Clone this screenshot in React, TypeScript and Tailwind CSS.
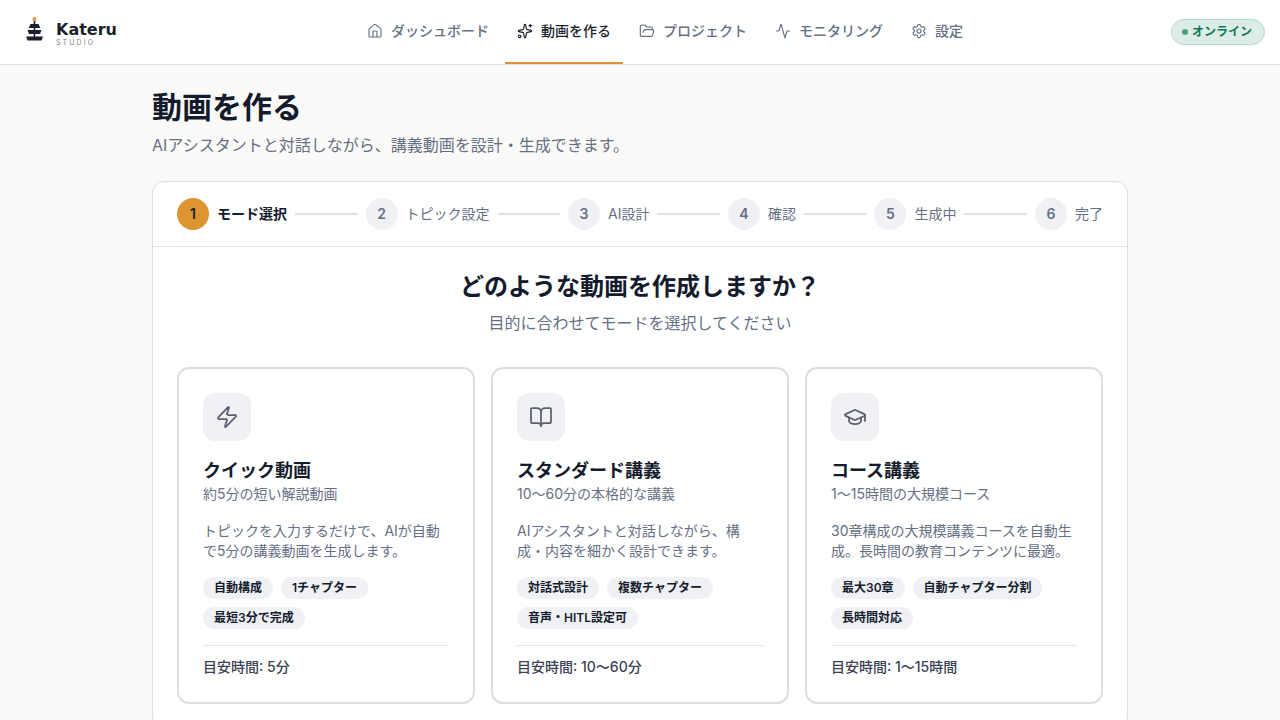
import React from "react";
import { House, Sparkles, FolderOpen, Activity, Settings, Zap, BookOpen, GraduationCap } from "lucide-react";

const font = "font-['Inter','Noto_Sans_CJK_JP',sans-serif]";

const nav = [
  { label: "ダッシュボード", Icon: House },
  { label: "動画を作る", Icon: Sparkles, active: true },
  { label: "プロジェクト", Icon: FolderOpen },
  { label: "モニタリング", Icon: Activity },
  { label: "設定", Icon: Settings },
];

const steps = ["モード選択", "トピック設定", "AI設計", "確認", "生成中", "完了"];

const cards = [
  {
    Icon: Zap,
    title: "クイック動画",
    sub: "約5分の短い解説動画",
    desc: "トピックを入力するだけで、AIが自動で5分の講義動画を生成します。",
    tags: ["自動構成", "1チャプター", "最短3分で完成"],
    time: "目安時間: 5分",
  },
  {
    Icon: BookOpen,
    title: "スタンダード講義",
    sub: "10〜60分の本格的な講義",
    desc: "AIアシスタントと対話しながら、構成・内容を細かく設計できます。",
    tags: ["対話式設計", "複数チャプター", "音声・HITL設定可"],
    time: "目安時間: 10〜60分",
  },
  {
    Icon: GraduationCap,
    title: "コース講義",
    sub: "1〜15時間の大規模コース",
    desc: "30章構成の大規模講義コースを自動生成。長時間の教育コンテンツに最適。",
    tags: ["最大30章", "自動チャプター分割", "長時間対応"],
    time: "目安時間: 1〜15時間",
  },
];

function Logo() {
  return (
    <svg width="20" height="26" viewBox="0 0 20 26" className="-mt-[6px] shrink-0">
      <circle cx="10.5" cy="3" r="2.2" fill="#e0a458" />
      <rect x="9.7" y="5" width="1.6" height="17" fill="#1a1f2e" />
      <path d="M6.5 8h8l1.8 4H4.7z" fill="#1a1f2e" />
      <path d="M3.5 14h14l-1.4 4H4.9z" fill="#1a1f2e" />
      <path d="M2 20.5h17l-1.5 4H3.5z" fill="#1a1f2e" />
    </svg>
  );
}

export default function App() {
  return (
    <div className={`${font} h-[720px] overflow-hidden bg-[#fbfaf8]`}>
      <header className="flex h-[65px] items-center justify-between border-b border-[#dedede] bg-white pl-6 pr-[15px]">
        <div className="flex w-[135px] items-center gap-[12px]">
          <Logo />
          <div className="flex flex-col pt-[4px]">
            <span className="font-['DejaVu_Sans',sans-serif] text-[16px] font-bold leading-[18px] text-[#1a1f2e]">Kateru</span>
            <span className="text-[7px] leading-[8px] tracking-[0.3em] text-[#7a8090]">STUDIO</span>
          </div>
        </div>
        <nav className="flex h-full items-center gap-1">
          {nav.map(({ label, Icon, active }) => (
            <div
              key={label}
              className={`flex h-full items-center gap-2 px-3 text-[14px] font-medium leading-[20px] border-b-2 ${
                active ? "border-[#dd9531] text-[#1a1f2e]" : "border-transparent text-[#667085]"
              }`}
            >
              <Icon size={16} strokeWidth={1.75} />
              <span>{label}</span>
            </div>
          ))}
        </nav>
        <div className="flex h-[26px] items-center gap-1 rounded-full border border-[#b9d8cc] bg-[#dcece6] pl-[10px] pr-3 text-[12px] font-bold leading-[16px] text-[#0f7a55]">
          <span className="size-[6px] rounded-full bg-[#4f9e82]" />
          オンライン
        </div>
      </header>

      <main className="mx-auto max-w-[1024px] px-6 pt-6">
        <h1 className="text-[30px] font-bold leading-[36px] text-[#141b2d]">動画を作る</h1>
        <p className="mt-2 text-[16px] leading-[24px] text-[#667085]">AIアシスタントと対話しながら、講義動画を設計・生成できます。</p>

        <section className="mt-6 rounded-xl border border-[#dedede] bg-white">
          <div className="flex items-center border-b border-[#e5e5e5] px-6 py-4">
            {steps.map((s, i) => (
              <React.Fragment key={s}>
                <div className="flex items-center gap-2">
                  <div
                    className={`flex size-8 items-center justify-center rounded-full text-[14px] font-semibold leading-[20px] ${
                      i === 0 ? "bg-[#dd9531] text-[#1a1f2e]" : "bg-[#eff1f5] text-[#667085]"
                    }`}
                  >
                    {i + 1}
                  </div>
                  <span className={`text-[14px] leading-[20px] ${i === 0 ? "font-semibold text-[#141b2d]" : "text-[#667085]"}`}>{s}</span>
                </div>
                {i < steps.length - 1 && <div className="mx-2 h-[2px] flex-1 bg-[#e0e0e0]" />}
              </React.Fragment>
            ))}
          </div>

          <div className="p-6">
            <h2 className="text-center text-[24px] font-bold leading-[32px] text-[#141b2d]">どのような動画を作成しますか？</h2>
            <p className="mt-2 text-center text-[16px] leading-[24px] text-[#667085]">目的に合わせてモードを選択してください</p>
            <div className="mt-8 grid grid-cols-3 gap-4">
              {cards.map(({ Icon, title, sub, desc, tags, time }) => (
                <div key={title} className="rounded-xl border-2 border-[#dedede] p-6">
                  <div className="flex size-12 items-center justify-center rounded-xl bg-[#eff1f5] text-[#5a6072]">
                    <Icon size={24} strokeWidth={1.75} />
                  </div>
                  <h3 className="mt-4 text-[18px] font-bold leading-[28px] text-[#141b2d]">{title}</h3>
                  <p className="text-[14px] leading-[18px] text-[#667085]">{sub}</p>
                  <p className="mt-[18px] text-[14px] leading-[20px] text-[#667085]">{desc}</p>
                  <div className="mt-4 flex flex-wrap gap-2">
                    {tags.map((t) => (
                      <span key={t} className="rounded-full bg-[#eff1f5] px-[11px] py-[2px] text-[12px] font-semibold leading-[18px] text-[#141b2d]">
                        {t}
                      </span>
                    ))}
                  </div>
                  <div className="mt-4 border-t border-[#e5e5e5] pb-[1px] pt-[11px] text-[14px] font-medium leading-[20px] text-[#3a4254]">{time}</div>
                </div>
              ))}
            </div>
          </div>
        </section>
      </main>
    </div>
  );
}
